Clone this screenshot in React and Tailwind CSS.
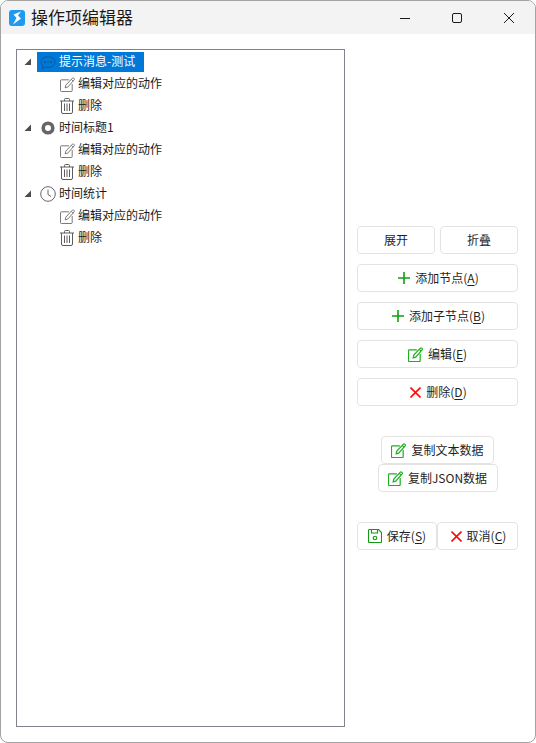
const FONT = "font-['Noto_Sans_CJK_SC','Noto_Sans',sans-serif]";

function Triangle() {
  return (
    <svg width="8" height="8" viewBox="0 0 8 8" className="shrink-0">
      <path d="M7 .5V7H.5Z" fill="#4d4d4d" />
    </svg>
  );
}

function ChatIcon({ color = '#0b5a9e' }) {
  return (
    <svg width="17" height="15" viewBox="0 0 18 16" fill="none" stroke={color} strokeWidth="1.100">
      <path d="M9 1.500c4.400 0 8 2.700 8 6s-3.600 6-8 6c-1 0-1.900-.1-2.800-.4L2.500 15l.8-3.300C1.900 10.600 1 9.100 1 7.500c0-3.300 3.600-6 8-6Z" />
      <circle cx="5.500" cy="7.500" r=".8" fill={color} />
      <circle cx="9" cy="7.500" r=".8" fill={color} />
      <circle cx="12.500" cy="7.500" r=".8" fill={color} />
    </svg>
  );
}

function RingIcon() {
  return (
    <svg width="16" height="16" viewBox="0 0 16 16" fill="none">
      <circle cx="8" cy="8" r="4.800" stroke="#666666" strokeWidth="3.600" />
    </svg>
  );
}

function ClockIcon() {
  return (
    <svg width="16" height="16" viewBox="0 0 16 16" fill="none" stroke="#666666" strokeWidth="1">
      <circle cx="8" cy="8" r="7.300" />
      <path d="M8 3.500V8.500L11 10.500" />
    </svg>
  );
}

function EditIcon({ color = '#6e6e6e', width = 1 }) {
  return (
    <svg width="15" height="15" viewBox="0 0 16 16" fill="none" stroke={color} strokeWidth={width}>
      <path d="M9.500 3H1.500a1 1 0 0 0-1 1v10.500a1 1 0 0 0 1 1H12a1 1 0 0 0 1-1V7.500" />
      <path d="M5.500 11.500l.7-2.800L13.200 1.200a1 1 0 0 1 1.400 0l.5.500a1 1 0 0 1 0 1.400L8.200 10.800Z" />
      <path d="M12 2.500l2 2" />
    </svg>
  );
}

function GreenEdit() {
  return <EditIcon color="#1fb01f" width={1.300} />;
}

function TrashIcon() {
  return (
    <svg width="14" height="16" viewBox="0 0 14 16" fill="none" stroke="#5c5c5c" strokeWidth="1">
      <path d="M0 3H14" />
      <path d="M4.500 3V1.500a1 1 0 0 1 1-1h3a1 1 0 0 1 1 1V3" />
      <path d="M1.500 3V14a1.500 1.500 0 0 0 1.500 1.500h8A1.500 1.500 0 0 0 12.500 14V3" />
      <path d="M4.500 5.500V13M7 5.500V13M9.500 5.500V13" />
    </svg>
  );
}

function PlusIcon() {
  return (
    <svg width="12" height="12" viewBox="0 0 12 12" fill="none" stroke="#119f11" strokeWidth="1.600">
      <path d="M6 0V12M0 6H12" />
    </svg>
  );
}

function CrossIcon() {
  return (
    <svg width="11" height="11" viewBox="0 0 11 11" fill="none" stroke="#ff0a0a" strokeWidth="1.600">
      <path d="M.5 .5L10.500 10.500M10.500 .5L.5 10.500" />
    </svg>
  );
}

function SaveIcon() {
  return (
    <svg width="14" height="14" viewBox="0 0 14 14" fill="none" stroke="#0f9a0f" strokeWidth="1.100">
      <path d="M1.500 .5H10.500L13.500 3.500V12.500a1 1 0 0 1-1 1H1.500a1 1 0 0 1-1-1V1.500a1 1 0 0 1 1-1Z" />
      <path d="M3.500 .5V4H9.500V.5" />
      <circle cx="7" cy="9" r="1.800" />
    </svg>
  );
}

function ParentRow({ icon, label, selected }) {
  return (
    <div className="flex items-center h-[22px] pl-[7px]">
      <Triangle />
      <div className={`ml-[5px] flex items-center h-[20px] pl-[3px] pr-[9px] ${selected ? 'bg-[#0078d7] text-white' : 'text-[#1a1a1a]'}`}>
        <span className="w-[16px] flex justify-center shrink-0">{icon}</span>
        <span className="ml-[3px] mb-[2px] text-[12px]">{label}</span>
      </div>
    </div>
  );
}

function ChildRow({ icon, label }) {
  return (
    <div className="flex items-center h-[22px] pl-[42px] text-[#1a1a1a]">
      <span className="w-[16px] flex justify-center shrink-0">{icon}</span>
      <span className="ml-[3px] mb-[2px] text-[12px]">{label}</span>
    </div>
  );
}

function Node({ icon, label, selected }) {
  return (
    <>
      <ParentRow icon={icon} label={label} selected={selected} />
      <ChildRow icon={<EditIcon />} label="编辑对应的动作" />
      <ChildRow icon={<TrashIcon />} label="删除" />
    </>
  );
}

function Btn({ className = '', icon, children }) {
  return (
    <button className={`h-[28px] flex items-center justify-center gap-[5px] bg-white border border-[#e3e3e3] rounded-[4px] text-[12px] text-[#1f1f1f] ${className}`}>
      {icon}
      <span>{children}</span>
    </button>
  );
}

function Hot({ children }) {
  return <span className="underline underline-offset-2">{children}</span>;
}

export default function App() {
  return (
    <div className={`w-[536px] h-[743px] flex flex-col bg-white border border-[#a3a3a3] rounded-[8px] overflow-hidden ${FONT}`}>
      <div className="h-[33px] shrink-0 flex items-center bg-[#f3f3f3]">
        <svg width="16" height="16" viewBox="0 0 16 16" className="ml-[8px]">
          <rect width="16" height="16" rx="3" fill="#1e9bf0" />
          <path d="M12 1.500L4.500 4.500 7.500 8 4 14.500 12 8.500 9 5.500Z" fill="white" />
        </svg>
        <span className="ml-[6px] mb-[3px] text-[17px] text-[#1a1a1a] leading-none">操作项编辑器</span>
        <div className="ml-auto flex items-center">
          <span className="w-[52px] flex justify-center">
            <svg width="10" height="10" viewBox="0 0 10 10" stroke="#1a1a1a"><path d="M0 5.500H10" /></svg>
          </span>
          <span className="w-[52px] flex justify-center">
            <svg width="10" height="10" viewBox="0 0 10 10" fill="none" stroke="#1a1a1a"><rect x=".5" y=".5" width="9" height="9" rx="1.500" /></svg>
          </span>
          <span className="w-[52px] flex justify-center">
            <svg width="10" height="10" viewBox="0 0 10 10" fill="none" stroke="#1a1a1a"><path d="M0 0L10 10M10 0L0 10" /></svg>
          </span>
        </div>
      </div>

      <div className="flex flex-1 pl-[15px] pr-[17px] pt-[15px]">
        <div className="w-[329px] h-[678px] shrink-0 border border-[#82828f] pt-[1px]">
          <Node icon={<ChatIcon />} label="提示消息-测试" selected />
          <Node icon={<RingIcon />} label="时间标题1" />
          <Node icon={<ClockIcon />} label="时间统计" />
        </div>

        <div className="ml-[12px] flex-1 flex flex-col pt-[177px]">
          <div className="flex gap-[5px]">
            <Btn className="w-[78px]">展开</Btn>
            <Btn className="w-[78px]">折叠</Btn>
          </div>
          <div className="flex flex-col gap-[10px] mt-[10px]">
            <Btn className="pl-[2px]" icon={<PlusIcon />}>添加节点(<Hot>A</Hot>)</Btn>
            <Btn className="pl-[2px]" icon={<PlusIcon />}>添加子节点(<Hot>B</Hot>)</Btn>
            <Btn className="gap-[4px]" icon={<GreenEdit />}>编辑(<Hot>E</Hot>)</Btn>
            <Btn className="pl-[2px]" icon={<CrossIcon />}>删除(<Hot>D</Hot>)</Btn>
          </div>
          <div className="flex flex-col items-center mt-[30px]">
            <Btn className="w-[113px] gap-[4px]" icon={<GreenEdit />}>复制文本数据</Btn>
            <Btn className="w-[120px] gap-[4px]" icon={<GreenEdit />}>复制JSON数据</Btn>
          </div>
          <div className="flex mt-[30px]">
            <Btn className="w-[80px]" icon={<SaveIcon />}>保存(<Hot>S</Hot>)</Btn>
            <Btn className="w-[81px] pl-[2px]" icon={<CrossIcon />}>取消(<Hot>C</Hot>)</Btn>
          </div>
        </div>
      </div>
    </div>
  );
}
